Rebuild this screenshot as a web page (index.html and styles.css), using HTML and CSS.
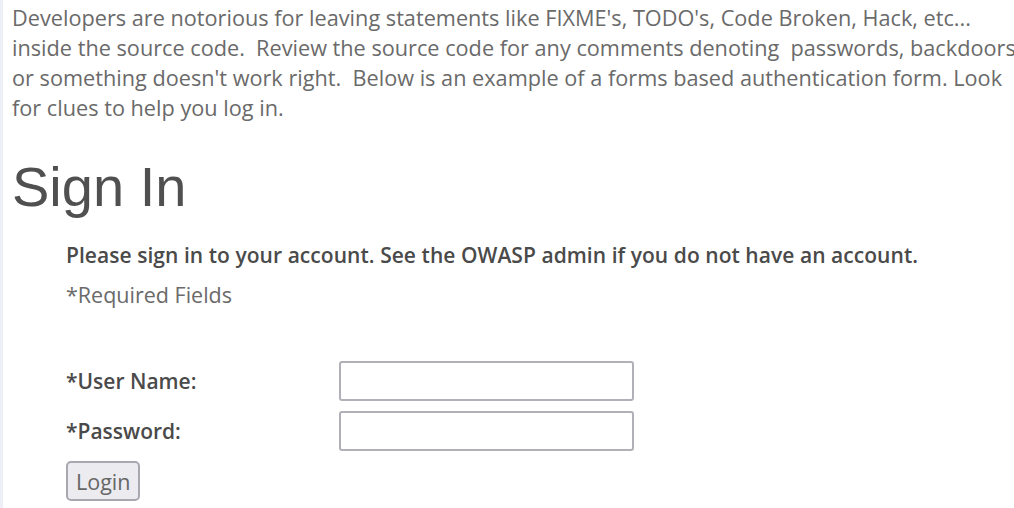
FILE: index.html
```html
<!DOCTYPE html>
<html>
<head>
<meta charset="utf-8">
<link rel="stylesheet" href="styles.css">
</head>
<body>
<div class="page">
  <p class="intro"><span class="line">Developers are notorious for leaving statements like FIXME's, TODO's, Code Broken, Hack, etc...</span><span class="line">inside the source code.&nbsp; Review the source code for any comments denoting&nbsp; passwords, backdoors</span><span class="line">or something doesn't work right.&nbsp; Below is an example of a forms based authentication form. Look</span><span class="line">for clues to help you log in.</span></p>
  <h1 class="title">Sign In</h1>
  <div class="form">
    <p class="lead">Please sign in to your account. See the OWASP admin if you do not have an account.</p>
    <p class="req">*Required Fields</p>
    <div class="fields">
      <label class="label">*User Name:</label>
      <input class="input" type="text">
      <label class="label">*Password:</label>
      <input class="input" type="password">
    </div>
    <button class="btn">Login</button>
  </div>
</div>
</body>
</html>
```
FILE: styles.css
```css
html, body { margin: 0; padding: 0; background: #fff; }
body { border-left: 3px solid #eeeef6; height: 508px; box-sizing: border-box; overflow: hidden; }
.page { padding: 0 0 0 9px; font-family: "Open Sans", "Noto Sans", sans-serif; }
.intro { margin: 0; padding-top: 3px; font-size: 21.7px; line-height: 30px; color: #6a6a6a; }
.line { display: block; white-space: nowrap; }
.title { margin: 31px 0 0 0; font-family: "Liberation Sans", Arial, sans-serif; font-weight: normal; font-size: 56px; line-height: 66px; color: #505050; }
.form { padding-left: 54px; }
.lead { margin: 20px 0 0 0; font-size: 21px; line-height: 30px; color: #4a4a4a; font-weight: 600; letter-spacing: 0.05px; }
.req { margin: 10px 0 0 0; font-size: 21.5px; line-height: 30px; color: #6a6a6a; }
.fields { margin-top: 51px; display: grid; grid-template-columns: 273px 295px; row-gap: 10px; align-items: center; }
.label { font-size: 21px; color: #4a4a4a; font-weight: 600; }
.input { height: 40px; box-sizing: border-box; border: 2px solid #b0b0b8; border-radius: 3px; background: #fff; }
.btn { margin-top: 10px; height: 40px; padding: 0 8px; font-family: "Open Sans", sans-serif; font-size: 21.5px; color: #666; background: #ebebf0; border: 2px solid #a8a8b0; border-radius: 5px; }
```
